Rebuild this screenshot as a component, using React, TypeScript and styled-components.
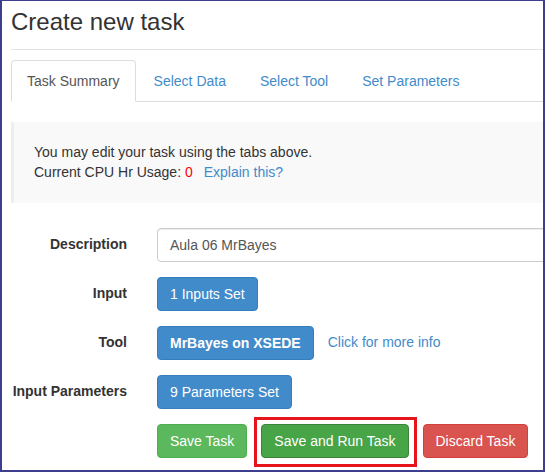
import React from "react";
import styled, { createGlobalStyle } from "styled-components";

const Global = createGlobalStyle`
  html, body { margin: 0; padding: 0; background: #fff; }
  body { font-family: "Liberation Sans", Arial, sans-serif; font-size: 14px; line-height: 1.428571; color: #333; }
  * { box-sizing: border-box; }
`;

const Frame = styled.div`
  width: 545px;
  height: 472px;
  border-style: solid;
  border-color: #3d3f8e;
  border-width: 1px 2px 2px 2px;
  overflow: hidden;
  background: #fff;
`;

const Page = styled.div`
  width: 640px;
  padding-left: 9px;
`;

const Title = styled.h1`
  margin: 0;
  padding: 8px 0 14px 0;
  font-size: 24px;
  font-weight: 500;
  line-height: 26px;
  color: #333;
  border-bottom: 1px solid #e3e3e3;
`;

const Tabs = styled.ul`
  display: flex;
  list-style: none;
  margin: 10px 0 0 0;
  padding: 0;
  border-bottom: 1px solid #ddd;
`;

const Tab = styled.li<{ $active?: boolean }>`
  margin-right: 2px;
  margin-bottom: -1px;
  padding: 10px 15px;
  line-height: 20px;
  border: 1px solid ${(p) => (p.$active ? "#ddd" : "transparent")};
  border-bottom-color: ${(p) => (p.$active ? "#fff" : "transparent")};
  border-radius: 4px 4px 0 0;
  background: ${(p) => (p.$active ? "#fff" : "transparent")};
  color: ${(p) => (p.$active ? "#555" : "#428bca")};
`;

const Well = styled.div`
  margin-top: 20px;
  padding: 20px 20px 21px 20px;
  background: #f9f9f9;
  border-left: 3px solid #eee;
  line-height: 20px;
`;

const Zero = styled.span`
  color: #f00;
  margin-right: 11px;
`;

const Link = styled.span`
  color: #428bca;
`;

const Form = styled.div`
  margin-top: 25px;
  display: flex;
  flex-direction: column;
  gap: 15px;
`;

const Row = styled.div`
  display: grid;
  grid-template-columns: 131px 1fr;
  align-items: center;
`;

const Label = styled.div`
  padding-right: 15px;
  text-align: right;
  font-weight: bold;
  white-space: nowrap;
`;

const Controls = styled.div`
  padding-left: 15px;
  display: flex;
  align-items: center;
  gap: 14px;
`;

const Input = styled.div`
  flex: 1;
  height: 34px;
  padding: 6px 12px;
  line-height: 20px;
  color: #555;
  border: 1px solid #ccc;
  border-radius: 4px;
  box-shadow: inset 0 1px 1px rgba(0, 0, 0, 0.075);
`;

const variants = {
  primary: { bg: "#428bca", border: "#357ebd" },
  success: { bg: "#5cb85c", border: "#4cae4c" },
  active: { bg: "#47a447", border: "#398439" },
  danger: { bg: "#d9534f", border: "#d43f3a" },
};

const Button = styled.button<{ $v: keyof typeof variants; $bold?: boolean }>`
  height: 34px;
  padding: 6px 12px;
  font-family: inherit;
  font-size: 14px;
  line-height: 20px;
  font-weight: ${(p) => (p.$bold ? "bold" : "normal")};
  color: #fff;
  background: ${(p) => variants[p.$v].bg};
  border: 1px solid ${(p) => variants[p.$v].border};
  border-radius: 4px;
  white-space: nowrap;
`;

const Highlight = styled.span`
  position: relative;
  display: inline-flex;
`;

const RedBox = styled.span`
  position: absolute;
  top: -7px;
  bottom: -9px;
  left: -7px;
  right: -8px;
  border: 3px solid #e8141d;
  pointer-events: none;
`;

export default function App() {
  return (
    <>
      <Global />
      <Frame>
        <Page>
          <Title>Create new task</Title>
          <Tabs>
            <Tab $active>Task Summary</Tab>
            <Tab>Select Data</Tab>
            <Tab>Select Tool</Tab>
            <Tab>Set Parameters</Tab>
          </Tabs>
          <Well>
            You may edit your task using the tabs above.
            <br />
            Current CPU Hr Usage: <Zero>0</Zero>
            <Link>Explain this?</Link>
          </Well>
          <Form>
            <Row>
              <Label>Description</Label>
              <Controls>
                <Input>Aula 06 MrBayes</Input>
              </Controls>
            </Row>
            <Row>
              <Label>Input</Label>
              <Controls>
                <Button $v="primary">1 Inputs Set</Button>
              </Controls>
            </Row>
            <Row>
              <Label>Tool</Label>
              <Controls>
                <Button $v="primary" $bold>
                  MrBayes on XSEDE
                </Button>
                <Link>Click for more info</Link>
              </Controls>
            </Row>
            <Row>
              <Label>Input Parameters</Label>
              <Controls>
                <Button $v="primary">9 Parameters Set</Button>
              </Controls>
            </Row>
            <Row>
              <Label />
              <Controls>
                <Button $v="success">Save Task</Button>
                <Highlight>
                  <Button $v="active">Save and Run Task</Button>
                  <RedBox />
                </Highlight>
                <Button $v="danger">Discard Task</Button>
              </Controls>
            </Row>
          </Form>
        </Page>
      </Frame>
    </>
  );
}
